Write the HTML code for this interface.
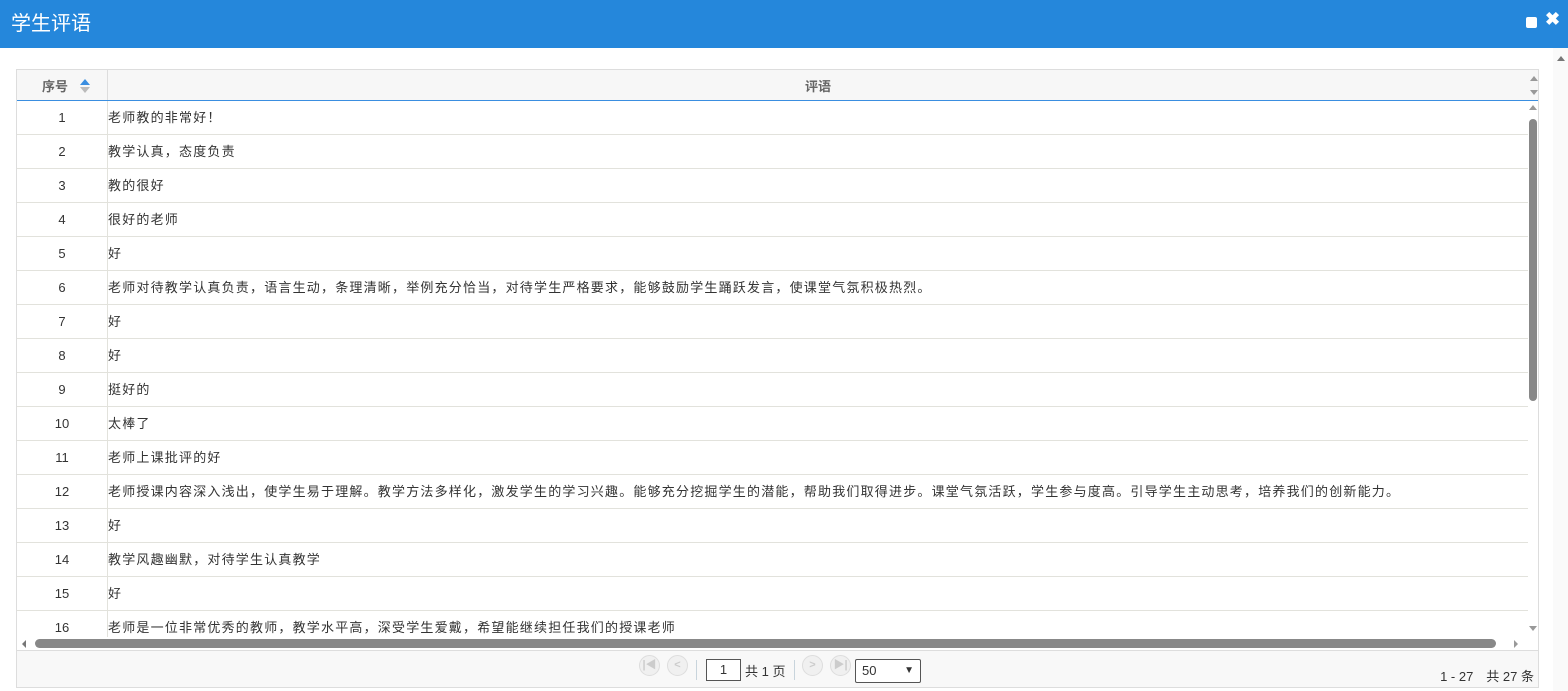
<!DOCTYPE html>
<html><head><meta charset="utf-8"><style>
*{margin:0;padding:0;box-sizing:border-box}
body{width:1568px;height:691px;overflow:hidden;background:#fff;font-family:"Liberation Sans","Noto Sans CJK SC",sans-serif;position:relative}
.hd{position:absolute;left:0;top:0;width:1568px;height:48px;background:#2587db;color:#fff;font-size:20px;line-height:48px;padding-left:11px}
.grid{position:absolute;left:16px;top:69px;width:1523px;height:619px;border:1px solid #ddd;overflow:hidden}
.th{position:absolute;left:0;top:0;width:1521px;height:31px;background:#f7f7f7;border-bottom:1px solid #3a8ee0;font-size:13px;font-weight:bold;color:#666}
.th .c1{position:absolute;left:0;top:0;width:91px;height:30px;border-right:1px solid #ddd;text-align:center;line-height:34px}
.th .c2{position:absolute;left:91px;top:0;width:1420px;height:30px;text-align:center;line-height:34px}
.row{position:absolute;left:0;width:1511px;height:34px;border-bottom:1px solid #e2e2dc;font-size:13px;color:#333;line-height:34px}
.row .c1{position:absolute;left:0;top:0;width:91px;height:34px;border-right:1px solid #e2e2dc;text-align:center}
.row .c2{position:absolute;left:91px;top:0;white-space:nowrap;letter-spacing:1.2px}
.vs{position:absolute;left:1511px;top:0;width:10px;height:568px;background:#fff}
.hs{position:absolute;left:0;top:567px;width:1521px;height:13px;background:#fff}
.pg{position:absolute;left:0;top:580px;width:1521px;height:37px;background:#f8f8f8;border-top:1px solid #ddd;font-size:13px;color:#333}
.tri{position:absolute;width:0;height:0}
.circ{position:absolute;top:4px;width:21px;height:21px;border-radius:50%;border:1px solid #ddd;background:#f0f0f0;color:#ccc;font-size:11px;text-align:center;line-height:19px;font-weight:bold}
</style></head><body>
<div class="hd">学生评语</div>
<div style="position:absolute;left:1526px;top:17px;width:11px;height:11px;background:#fff;border-radius:2px"></div>
<div style="position:absolute;left:1545px;top:9px;color:#fff;font-size:18px;font-weight:bold">✖</div>
<div style="position:absolute;left:1553px;top:48px;width:15px;height:643px;background:#fafafa"></div>
<div class="tri" style="left:1557px;top:56px;border-left:4px solid transparent;border-right:4px solid transparent;border-bottom:5px solid #777"></div>
<div class="grid">
<div class="th"><div class="c1" style="padding-right:14px">序号</div><div class="c2">评语</div></div>
<div class="tri" style="left:63px;top:9px;border-left:5px solid transparent;border-right:5px solid transparent;border-bottom:6px solid #3a8ee0"></div>
<div class="tri" style="left:63px;top:17px;border-left:5px solid transparent;border-right:5px solid transparent;border-top:6px solid #bbb"></div>
<div class="tri" style="left:1513px;top:6px;border-left:4px solid transparent;border-right:4px solid transparent;border-bottom:5px solid #999"></div>
<div class="tri" style="left:1513px;top:20px;border-left:4px solid transparent;border-right:4px solid transparent;border-top:5px solid #999"></div>
<div class="row" style="top:31px"><div class="c1">1</div><div class="c2">老师教的非常好！</div></div>
<div class="row" style="top:65px"><div class="c1">2</div><div class="c2">教学认真，态度负责</div></div>
<div class="row" style="top:99px"><div class="c1">3</div><div class="c2">教的很好</div></div>
<div class="row" style="top:133px"><div class="c1">4</div><div class="c2">很好的老师</div></div>
<div class="row" style="top:167px"><div class="c1">5</div><div class="c2">好</div></div>
<div class="row" style="top:201px"><div class="c1">6</div><div class="c2">老师对待教学认真负责，语言生动，条理清晰，举例充分恰当，对待学生严格要求，能够鼓励学生踊跃发言，使课堂气氛积极热烈。</div></div>
<div class="row" style="top:235px"><div class="c1">7</div><div class="c2">好</div></div>
<div class="row" style="top:269px"><div class="c1">8</div><div class="c2">好</div></div>
<div class="row" style="top:303px"><div class="c1">9</div><div class="c2">挺好的</div></div>
<div class="row" style="top:337px"><div class="c1">10</div><div class="c2">太棒了</div></div>
<div class="row" style="top:371px"><div class="c1">11</div><div class="c2">老师上课批评的好</div></div>
<div class="row" style="top:405px"><div class="c1">12</div><div class="c2">老师授课内容深入浅出，使学生易于理解。教学方法多样化，激发学生的学习兴趣。能够充分挖掘学生的潜能，帮助我们取得进步。课堂气氛活跃，学生参与度高。引导学生主动思考，培养我们的创新能力。</div></div>
<div class="row" style="top:439px"><div class="c1">13</div><div class="c2">好</div></div>
<div class="row" style="top:473px"><div class="c1">14</div><div class="c2">教学风趣幽默，对待学生认真教学</div></div>
<div class="row" style="top:507px"><div class="c1">15</div><div class="c2">好</div></div>
<div class="row" style="top:541px"><div class="c1">16</div><div class="c2">老师是一位非常优秀的教师，教学水平高，深受学生爱戴，希望能继续担任我们的授课老师</div></div>
<div class="vs" style="top:32px;height:536px">
<div class="tri" style="left:1px;top:3px;border-left:4px solid transparent;border-right:4px solid transparent;border-bottom:5px solid #999"></div>
<div style="position:absolute;left:1px;top:17px;width:8px;height:282px;background:#888;border-radius:4px"></div>
<div class="tri" style="left:1px;top:524px;border-left:4px solid transparent;border-right:4px solid transparent;border-top:5px solid #999"></div>
</div>
<div class="hs">
<div class="tri" style="left:5px;top:3px;border-top:4px solid transparent;border-bottom:4px solid transparent;border-right:4px solid #777"></div>
<div style="position:absolute;left:18px;top:2px;width:1461px;height:9px;background:#888;border-radius:5px"></div>
<div class="tri" style="left:1497px;top:3px;border-top:4px solid transparent;border-bottom:4px solid transparent;border-left:4px solid #999"></div>
</div>
<div class="pg">
<div class="circ" style="left:622px">|◀</div>
<div class="circ" style="left:650px">&lt;</div>
<div style="position:absolute;left:679px;top:9px;width:1px;height:20px;background:#c8d4dc"></div>
<div style="position:absolute;left:689px;top:8px;width:35px;height:22px;border:1px solid #555;background:#fff;text-align:center;line-height:20px">1</div>
<div style="position:absolute;left:728px;top:10px">共 1 页</div>
<div style="position:absolute;left:777px;top:9px;width:1px;height:20px;background:#c8d4dc"></div>
<div class="circ" style="left:785px">&gt;</div>
<div class="circ" style="left:813px">▶|</div>
<div style="position:absolute;left:838px;top:8px;width:66px;height:24px;border:1px solid #555;background:#fff;border-radius:2px;padding-left:6px;line-height:22px">50<span style="position:absolute;right:6px;top:0;font-size:10px">&#9660;</span></div>
<div style="position:absolute;right:4px;top:15px">1 - 27　共 27 条</div>
</div>
</div>
</body></html>
